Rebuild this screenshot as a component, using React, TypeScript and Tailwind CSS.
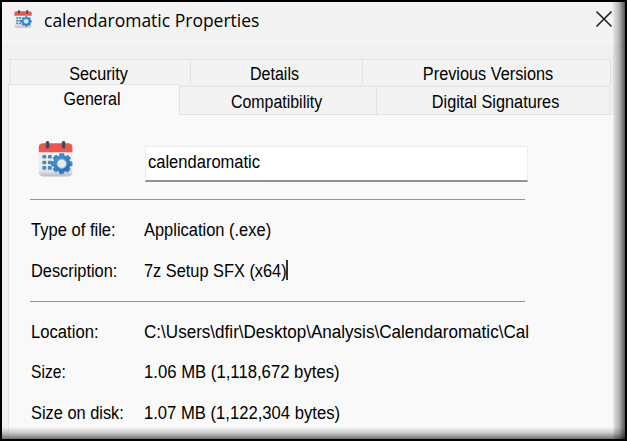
import { clsx } from "clsx";

const TEETH = [0, 45, 90, 135, 180, 225, 270, 315];

function CalendarIcon({ width, height }: { width: number; height: number }) {
  return (
    <svg width={width} height={height} viewBox="0 0 36 38" preserveAspectRatio="none">
      <defs>
        <linearGradient id="paper" x1="0" y1="0" x2="0" y2="1">
          <stop offset="0" stopColor="#f6f5f6" />
          <stop offset="0.8" stopColor="#e8e7ec" />
          <stop offset="1" stopColor="#b7bccb" />
        </linearGradient>
        <linearGradient id="gear" x1="0" y1="0" x2="1" y2="1">
          <stop offset="0" stopColor="#4a9ad8" />
          <stop offset="1" stopColor="#2469ad" />
        </linearGradient>
      </defs>
      <rect x="0.8" y="4" width="34.6" height="33.5" rx="4.5" fill="url(#paper)" />
      <path d="M0.800 12V7q0-4.500 4.500-4.500h25.600Q35.400 2.500 35.400 7v5z" fill="#e9594f" />
      {[8, 24.5].map((x) => (
        <rect key={x} x={x} y="0" width="3.600" height="8" rx="1.600" fill="#414d5b" />
      ))}
      {[14.8, 20.8, 26.5].map((y) => (
        <g key={y} fill="#458ac1">
          <rect x="4.500" y={y} width="4" height="3.800" rx="0.800" />
          <rect x="10.200" y={y} width="4" height="3.800" rx="0.800" />
        </g>
      ))}
      <g fill="url(#gear)">
        {TEETH.map((a) => (
          <rect key={a} x="21.700" y="13" width="5.400" height="6" rx="1.200" transform={`rotate(${a} 24.400 24)`} />
        ))}
        <circle cx="24.400" cy="24" r="8.900" />
      </g>
      <circle cx="24.400" cy="24" r="4.900" fill="#e9edf3" stroke="#73afdc" strokeWidth="1" />
    </svg>
  );
}

function Text({ children, className }: { children: string; className: string }) {
  return (
    <span className={clsx("inline-block whitespace-pre text-[18px] leading-5", className)}>
      {children}
    </span>
  );
}

function Tab({ label, className, textClass }: { label: string; className: string; textClass: string }) {
  return (
    <div className={clsx("flex shrink-0 justify-center border-[#e3e3e3]", className)}>
      <Text className={textClass}>{label}</Text>
    </div>
  );
}

function Row({ label, value, labelClass, valueClass, caret, className }: {
  label: string;
  value: string;
  labelClass: string;
  valueClass: string;
  caret?: boolean;
  className?: string;
}) {
  return (
    <div className={clsx("flex h-5", className)}>
      <div className="w-[114px] shrink-0 pl-px">
        <Text className={clsx("origin-left", labelClass)}>{label}</Text>
      </div>
      <div className={clsx("shrink-0", caret && "w-[144px] border-r-2 border-[#333]")}>
        <Text className={clsx("origin-left", valueClass)}>{value}</Text>
      </div>
    </div>
  );
}

export default function App() {
  return (
    <div className="relative h-[441px] w-[627px] overflow-hidden border-2 border-black bg-[#f0f0f0] font-['Liberation_Sans',Arial,sans-serif] text-black">
      {/* Title bar */}
      <div className="flex h-[42px] bg-[#f3f3f3] pl-[12px] pt-[6px]">
        <div className="pt-[2px]">
          <CalendarIcon width={18} height={18} />
        </div>
        <span className="ml-[12px] inline-block w-[560px] whitespace-pre font-['Open_Sans',sans-serif] text-[17.500px] leading-6">
          calendaromatic Properties
        </span>
      </div>

      {/* Tabs */}
      <div className="ml-[8px] mt-[15px] flex h-[25px] w-[601px]">
        <Tab label="Security" className="w-[180px] border-l border-t bg-[#f3f3f3] pr-[3px] pt-[4px]" textClass="scale-x-[0.9]" />
        <Tab label="Details" className="w-[172px] border-l border-t bg-[#f3f3f3] pr-[3px] pt-[4px]" textClass="scale-x-[0.89]" />
        <Tab label="Previous Versions" className="w-[249px] border-x border-t bg-[#f3f3f3] pl-[3px] pt-[4px]" textClass="scale-x-[0.905]" />
      </div>
      <div className="ml-[6px] flex h-[31px] w-[603px] items-end">
        <Tab label="General" className="h-[31px] w-[171px] border-l border-t bg-[#f9f9f9] pr-[3px] pt-[4px]" textClass="scale-x-[0.89]" />
        <Tab label="Compatibility" className="h-[29px] w-[198px] border-x border-y bg-[#f3f3f3] pr-[3px] pt-[5px]" textClass="scale-x-[0.885]" />
        <Tab label="Digital Signatures" className="h-[29px] w-[233px] border-y border-r bg-[#f3f3f3] pl-[5px] pt-[5px]" textClass="scale-x-[0.904]" />
      </div>

      {/* General page */}
      <div className="ml-[6px] h-[330px] w-[606px] border-l border-[#e5e5e5] bg-[#f9f9f9] pl-[21px]">
        <div className="flex h-[84px]">
          <div className="w-[115px] pl-[8px] pt-[26px]">
            <CalendarIcon width={35} height={36} />
          </div>
          <div className="mt-[31px] h-[36px] w-[383px] border border-b-2 border-[#ececec] border-b-[#929292] bg-white pl-[2px] pt-[4px]">
            <Text className="origin-left scale-x-[0.918]">calendaromatic</Text>
          </div>
        </div>
        <div className="h-px w-[495px] bg-[#949494]" />

        <Row label="Type of file:" value="Application (.exe)" labelClass="scale-x-[0.92]" valueClass="scale-x-[0.914]" className="mt-[19px]" />
        <Row label="Description:" value="7z Setup SFX (x64)" labelClass="scale-x-[0.908]" valueClass="scale-x-[0.908]" caret className="mt-[21px]" />

        <div className="mt-[21px] h-px w-[495px] bg-[#949494]" />

        <Row label="Location:" value={"C:\\Users\\dfir\\Desktop\\Analysis\\Calendaromatic\\Cal"} labelClass="scale-x-[0.925]" valueClass="scale-x-[0.948]" className="mt-[19px]" />
        <Row label="Size:" value="1.06 MB (1,118,672 bytes)" labelClass="scale-x-[0.87]" valueClass="scale-x-[0.928]" className="mt-[20px]" />
        <Row label="Size on disk:" value="1.07 MB (1,122,304 bytes)" labelClass="scale-x-[0.91]" valueClass="scale-x-[0.924]" className="mt-[21px]" />
      </div>

      {/* Edge shading lies over the window content */}
      <div className="absolute bottom-0 right-0 top-0 w-[12px] bg-linear-to-r from-black/5 via-black/25 to-black/65" />
      <div className="absolute bottom-0 left-0 right-0 h-[12px] bg-linear-to-b from-black/0 via-black/20 to-black/55" />

      <svg className="absolute right-[12px] top-[8px]" width="18" height="18" viewBox="0 0 18 18">
        <path d="M1.500 1.500l15 15M16.500 1.500l-15 15" stroke="#222" strokeWidth="1.600" />
      </svg>
    </div>
  );
}
